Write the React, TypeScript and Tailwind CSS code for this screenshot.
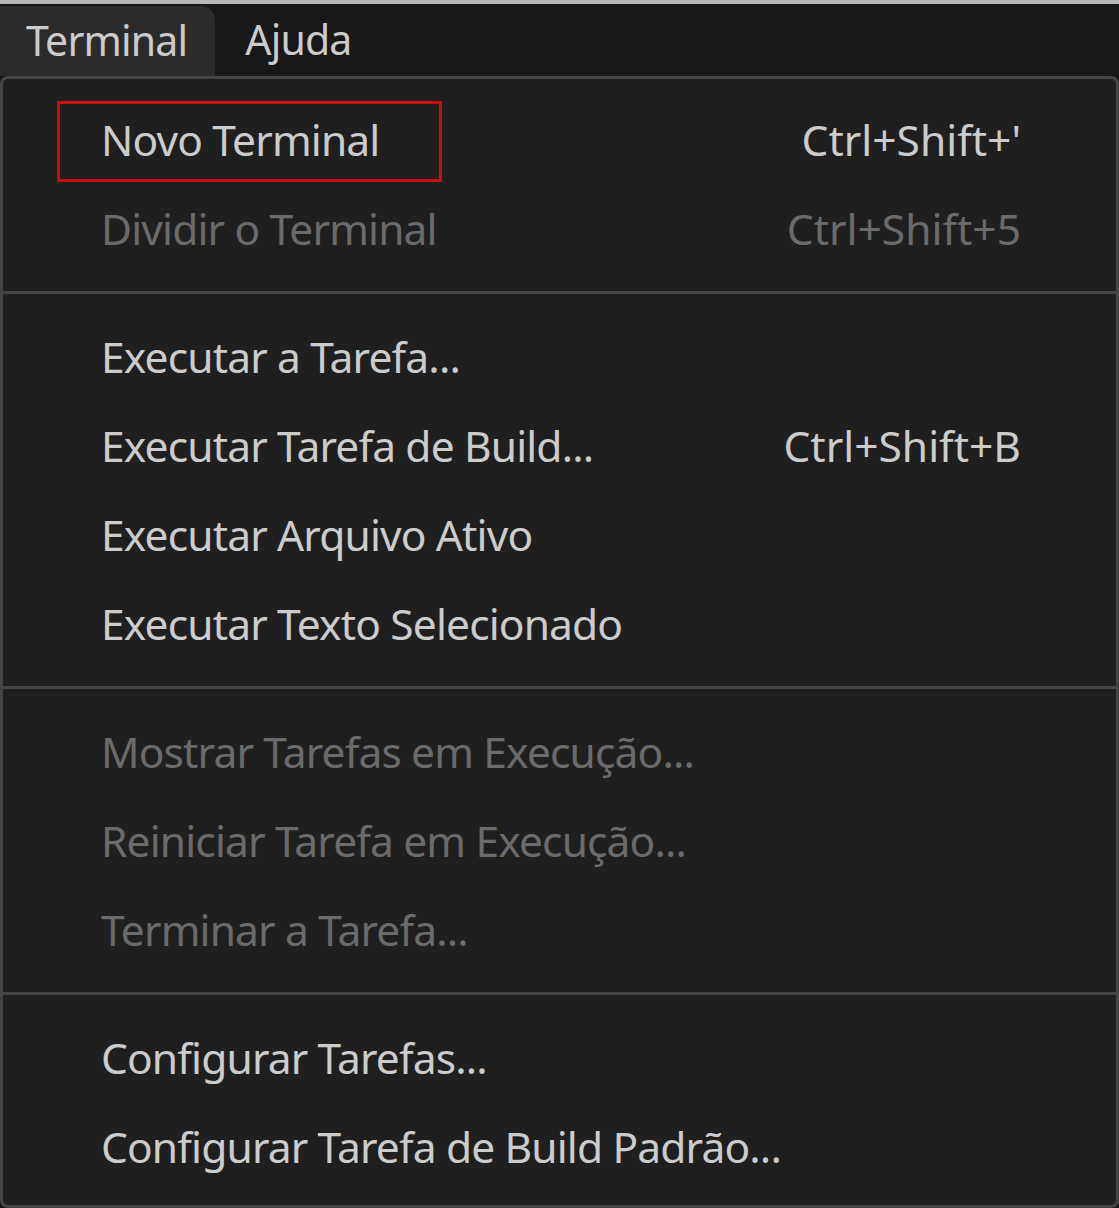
import React from 'react';

type Item = { label: string; shortcut?: string; disabled?: boolean; boxed?: boolean };

const groups: Item[][] = [
  [
    { label: 'Novo Terminal', shortcut: "Ctrl+Shift+'", boxed: true },
    { label: 'Dividir o Terminal', shortcut: 'Ctrl+Shift+5', disabled: true },
  ],
  [
    { label: 'Executar a Tarefa...' },
    { label: 'Executar Tarefa de Build...', shortcut: 'Ctrl+Shift+B' },
    { label: 'Executar Arquivo Ativo' },
    { label: 'Executar Texto Selecionado' },
  ],
  [
    { label: 'Mostrar Tarefas em Execução...', disabled: true },
    { label: 'Reiniciar Tarefa em Execução...', disabled: true },
    { label: 'Terminar a Tarefa...', disabled: true },
  ],
  [
    { label: 'Configurar Tarefas...' },
    { label: 'Configurar Tarefa de Build Padrão...' },
  ],
];

const MenuRow: React.FC<{ item: Item }> = ({ item }) => (
  <div
    className={`relative flex items-center justify-between h-[89px] pl-[98px] pr-[95px] ${
      item.disabled ? 'text-[#6b6b6b]' : 'text-[#cccccc]'
    }`}
  >
    {item.boxed && (
      <div className="absolute left-[54px] top-[6px] w-[385px] h-[81px] border-[3px] border-[#cc0a12]" />
    )}
    <span className="relative tracking-[-0.02em]">{item.label}</span>
    {item.shortcut && <span>{item.shortcut}</span>}
  </div>
);

export default function App() {
  return (
    <div
      className="w-[1119px] h-[1208px] bg-[#181818] border-t-[4px] border-[#b8b8b8] flex flex-col"
      style={{ fontFamily: '"Noto Sans", "Open Sans", sans-serif' }}
    >
      <div className="flex h-[72px] text-[41px] text-[#cccccc] tracking-[-0.02em]">
        <div className="flex items-center pl-[26px] pr-[28px] mt-[2px] bg-[#2b2b2b] rounded-tr-[14px]">Terminal</div>
        <div className="flex items-center px-[30px]">Ajuda</div>
      </div>
      <div className="flex-1 bg-[#1f1f1f] border-[3px] border-[#454545] rounded-[8px] pt-[16px] pb-[10px] text-[42.5px]">
        {groups.map((group, gi) => (
          <div key={gi}>
            {gi > 0 && (
              <div className="h-[39px] flex items-center">
                <div className="w-full h-[3px] bg-[#454545]" />
              </div>
            )}
            {group.map((item) => (
              <MenuRow key={item.label} item={item} />
            ))}
          </div>
        ))}
      </div>
    </div>
  );
}
